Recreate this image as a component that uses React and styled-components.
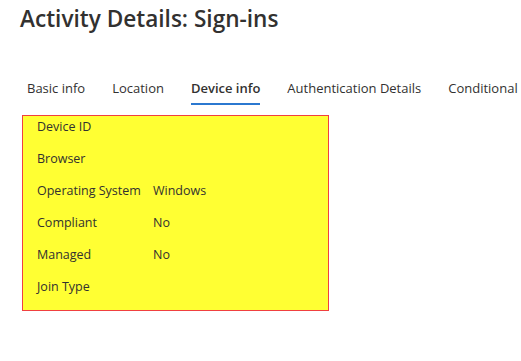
import React from 'react'
import styled, { createGlobalStyle } from 'styled-components'

const GlobalStyle = createGlobalStyle`
  body {
    margin: 0;
    background: #ffffff;
    font-family: "Open Sans", "Noto Sans", sans-serif;
    color: #323130;
  }
`

const Page = styled.div`
  width: 521px;
  height: 361px;
  overflow: hidden;
  padding: 3px 0 0 20px;
  box-sizing: border-box;
`

const Title = styled.h1`
  margin: 0;
  font-size: 22.6px;
  font-weight: 600;
  line-height: 32px;
  color: #323130;
  white-space: nowrap;
`

const Tabs = styled.div`
  display: flex;
  gap: 27px;
  margin: 44px 0 0 7px;
  white-space: nowrap;
`

const Tab = styled.div`
  font-size: 13px;
  line-height: 18px;
  padding-bottom: 6px;
  color: #323130;
  font-weight: ${p => (p.active ? 600 : 400)};
  border-bottom: 2px solid ${p => (p.active ? '#2b78d0' : 'transparent')};
`

const Panel = styled.div`
  margin: 10px 0 0 2px;
  width: 307px;
  height: 196px;
  box-sizing: border-box;
  background: #ffff33;
  border: 1px solid #f04040;
  padding: 1px 0 0 14px;
  display: flex;
  flex-direction: column;
  gap: 12px;
`

const Row = styled.div`
  display: grid;
  grid-template-columns: 116px 1fr;
  line-height: 20px;
  font-size: 12.5px;
  color: #323130;
`

const tabs = ['Basic info', 'Location', 'Device info', 'Authentication Details', 'Conditional']

const rows = [
  ['Device ID', ''],
  ['Browser', ''],
  ['Operating System', 'Windows'],
  ['Compliant', 'No'],
  ['Managed', 'No'],
  ['Join Type', ''],
]

export default function App() {
  return (
    <>
      <GlobalStyle />
      <Page>
        <Title>Activity Details: Sign-ins</Title>
        <Tabs>
          {tabs.map(t => (
            <Tab key={t} active={t === 'Device info'}>{t}</Tab>
          ))}
        </Tabs>
        <Panel>
          {rows.map(([label, value]) => (
            <Row key={label}>
              <span>{label}</span>
              <span>{value}</span>
            </Row>
          ))}
        </Panel>
      </Page>
    </>
  )
}
